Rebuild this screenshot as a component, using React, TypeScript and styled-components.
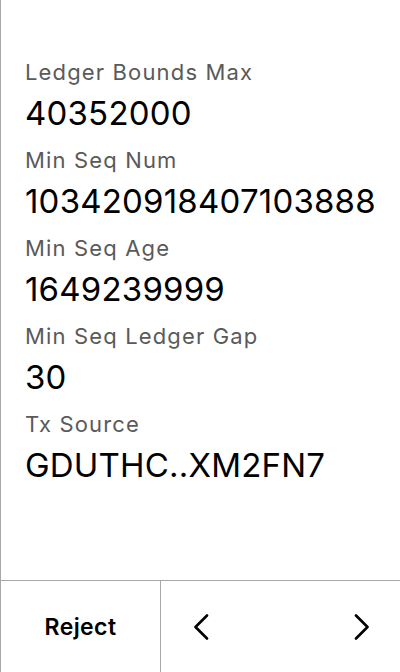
import React from "react";
import styled, { createGlobalStyle } from "styled-components";

const Global = createGlobalStyle`
  html, body { margin: 0; padding: 0; background: #fff; }
  body { font-family: Inter, "Noto Sans", sans-serif; }
`;

const Screen = styled.div`
  width: 400px;
  height: 672px;
  box-sizing: border-box;
  border-left: 1px solid #a8a8a8;
  display: flex;
  flex-direction: column;
  background: #fff;
`;

const Content = styled.div`
  flex: 1;
  padding: 56px 24px 0 24px;
  display: flex;
  flex-direction: column;
`;

const Field = styled.div`
  display: flex;
  flex-direction: column;
  height: 88px;
`;

const Label = styled.div`
  font-size: 22px;
  line-height: 32px;
  letter-spacing: 1.15px;
  color: #5a5a5a;
`;

const Value = styled.div`
  font-size: 33px;
  line-height: 50px;
  letter-spacing: 0.2px;
  color: #000;
`;

const Footer = styled.div`
  height: 92px;
  border-top: 1px solid #a8a8a8;
  box-sizing: border-box;
  display: grid;
  grid-template-columns: 160px 1fr;
`;

const RejectButton = styled.button`
  border: none;
  border-right: 1px solid #a8a8a8;
  background: transparent;
  font-family: Inter, sans-serif;
  font-weight: 600;
  font-size: 23px;
  letter-spacing: 0.4px;
  color: #000;
  padding: 0;
`;

const Nav = styled.div`
  display: flex;
  align-items: center;
  justify-content: space-between;
  padding: 0 30px 0 32px;
`;

const NavButton = styled.button`
  border: none;
  background: transparent;
  padding: 0;
  display: flex;
  align-items: center;
`;

const Chevron = ({ dir }: { dir: "left" | "right" }) => (
  <svg width="16" height="26" viewBox="0 0 16 26">
    <path
      d={dir === "left" ? "M14 1.5 L2.5 13 L14 24.5" : "M2 1.5 L13.5 13 L2 24.5"}
      fill="none"
      stroke="#000"
      strokeWidth="2.6"
      strokeLinecap="round"
      strokeLinejoin="round"
    />
  </svg>
);

const fields = [
  ["Ledger Bounds Max", "40352000"],
  ["Min Seq Num", "103420918407103888"],
  ["Min Seq Age", "1649239999"],
  ["Min Seq Ledger Gap", "30"],
  ["Tx Source", "GDUTHC..XM2FN7"],
];

export default function App() {
  return (
    <>
      <Global />
      <Screen>
        <Content>
          {fields.map(([l, v]) => (
            <Field key={l}>
              <Label>{l}</Label>
              <Value>{v}</Value>
            </Field>
          ))}
        </Content>
        <Footer>
          <RejectButton>Reject</RejectButton>
          <Nav>
            <NavButton><Chevron dir="left" /></NavButton>
            <NavButton><Chevron dir="right" /></NavButton>
          </Nav>
        </Footer>
      </Screen>
    </>
  );
}
